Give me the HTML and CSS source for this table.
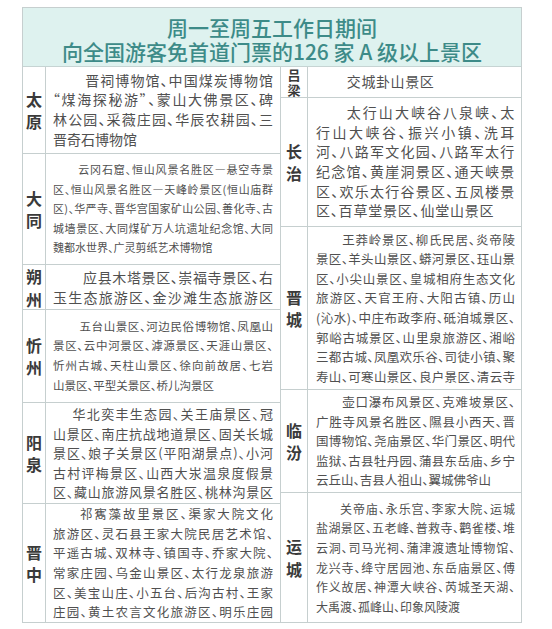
FILE: index.html
```html
<!DOCTYPE html>
<html lang="zh-CN">
<head>
<meta charset="utf-8">
<title>免首道门票景区</title>
<link rel="stylesheet" href="styles.css">
</head>
<body>
<div class="sheet">
  <div class="head">
    <h1 class="ttl">周一至周五工作日期间<br>向全国游客免首道门票的126 家 A 级以上景区</h1>
  </div>
  <div class="body">
    <div class="col col-l">
      <div class="row">
        <div class="lab">太原</div>
        <div class="txt fs-ty">
          <span class="ln first">晋祠博物馆、中国煤炭博物馆</span>
          <span class="ln">“煤海探秘游”、蒙山大佛景区、碑</span>
          <span class="ln">林公园、采薇庄园、华辰农耕园、三</span>
          <span class="ln last">晋奇石博物馆</span>
        </div>
      </div>
      <div class="row">
        <div class="lab">大同</div>
        <div class="txt fs-dt">
          <span class="ln first">云冈石窟、恒山风景名胜区—悬空寺景</span>
          <span class="ln">区、恒山风景名胜区—天峰岭景区(恒山庙群</span>
          <span class="ln">区)、华严寺、晋华宫国家矿山公园、善化寺、古</span>
          <span class="ln">城墙景区、大同煤矿万人坑遗址纪念馆、大同</span>
          <span class="ln last">魏都水世界、广灵剪纸艺术博物馆</span>
        </div>
      </div>
      <div class="row">
        <div class="lab">朔州</div>
        <div class="txt fs-sz">
          <span class="ln first">应县木塔景区、崇福寺景区、右</span>
          <span class="ln">玉生态旅游区、金沙滩生态旅游区</span>
        </div>
      </div>
      <div class="row">
        <div class="lab">忻州</div>
        <div class="txt fs-xz">
          <span class="ln first">五台山景区、河边民俗博物馆、凤凰山</span>
          <span class="ln">景区、云中河景区、滹源景区、天涯山景区、</span>
          <span class="ln">忻州古城、天柱山景区、徐向前故居、七岩</span>
          <span class="ln last">山景区、平型关景区、桥儿沟景区</span>
        </div>
      </div>
      <div class="row">
        <div class="lab">阳泉</div>
        <div class="txt fs-yq">
          <span class="ln first">华北奕丰生态园、关王庙景区、冠</span>
          <span class="ln">山景区、南庄抗战地道景区、固关长城</span>
          <span class="ln">景区、娘子关景区(平阳湖景点)、小河</span>
          <span class="ln">古村评梅景区、山西大汖温泉度假景</span>
          <span class="ln">区、藏山旅游风景名胜区、桃林沟景区</span>
        </div>
      </div>
      <div class="row">
        <div class="lab">晋中</div>
        <div class="txt fs-jz">
          <span class="ln first">祁寯藻故里景区、渠家大院文化</span>
          <span class="ln">旅游区、灵石县王家大院民居艺术馆、</span>
          <span class="ln">平遥古城、双林寺、镇国寺、乔家大院、</span>
          <span class="ln">常家庄园、乌金山景区、太行龙泉旅游</span>
          <span class="ln">区、美宝山庄、小五台、后沟古村、王家</span>
          <span class="ln">庄园、黄土农言文化旅游区、明乐庄园</span>
        </div>
      </div>
    </div>
    <div class="col col-r">
      <div class="row">
        <div class="lab lab-sm">吕梁</div>
        <div class="txt fs-ll">
          <span class="ln first last">交城卦山景区</span>
        </div>
      </div>
      <div class="row">
        <div class="lab">长治</div>
        <div class="txt fs-cz">
          <span class="ln first">太行山大峡谷八泉峡、太</span>
          <span class="ln">行山大峡谷、振兴小镇、洗耳</span>
          <span class="ln">河、八路军文化园、八路军太行</span>
          <span class="ln">纪念馆、黄崖洞景区、通天峡景</span>
          <span class="ln">区、欢乐太行谷景区、五凤楼景</span>
          <span class="ln last">区、百草堂景区、仙堂山景区</span>
        </div>
      </div>
      <div class="row">
        <div class="lab">晋城</div>
        <div class="txt fs-jc">
          <span class="ln first">王莽岭景区、柳氏民居、炎帝陵</span>
          <span class="ln">景区、羊头山景区、蟒河景区、珏山景</span>
          <span class="ln">区、小尖山景区、皇城相府生态文化</span>
          <span class="ln">旅游区、天官王府、大阳古镇、历山</span>
          <span class="ln">(沁水)、中庄布政李府、砥洎城景区、</span>
          <span class="ln">郭峪古城景区、山里泉旅游区、湘峪</span>
          <span class="ln">三都古城、凤凰欢乐谷、司徒小镇、聚</span>
          <span class="ln">寿山、可寒山景区、良户景区、清云寺</span>
        </div>
      </div>
      <div class="row">
        <div class="lab">临汾</div>
        <div class="txt fs-lf">
          <span class="ln first">壶口瀑布风景区、克难坡景区、</span>
          <span class="ln">广胜寺风景名胜区、隰县小西天、晋</span>
          <span class="ln">国博物馆、尧庙景区、华门景区、明代</span>
          <span class="ln">监狱、古县牡丹园、蒲县东岳庙、乡宁</span>
          <span class="ln last">云丘山、吉县人祖山、翼城佛爷山</span>
        </div>
      </div>
      <div class="row">
        <div class="lab">运城</div>
        <div class="txt fs-yc">
          <span class="ln first">关帝庙、永乐宫、李家大院、运城</span>
          <span class="ln">盐湖景区、五老峰、普救寺、鹳雀楼、堆</span>
          <span class="ln">云洞、司马光祠、蒲津渡遗址博物馆、</span>
          <span class="ln">龙兴寺、绛守居园池、东岳庙景区、傅</span>
          <span class="ln">作义故居、神潭大峡谷、芮城圣天湖、</span>
          <span class="ln last">大禹渡、孤峰山、印象风陵渡</span>
        </div>
      </div>
    </div>
  </div>
</div>
</body>
</html>
```
FILE: styles.css
```css
* { box-sizing: border-box; }
html, body { margin: 0; padding: 0; background: #ffffff; }
body {
  font-family: "Noto Sans CJK SC", "Noto Sans", sans-serif;
  color: #4a4a4a;
}
.sheet {
  margin: 7px 0 0 22px;
  width: 500px;
  border: 1px solid #c6cfcf;
}
.head {
  background: #def2ef;
  border-bottom: 1px solid #c6d4d3;
  padding: 7px 0 3px;
}
.ttl {
  margin: 0;
  color: #3d8b88;
  font-size: 21px;
  font-weight: 500;
  line-height: 24px;
  text-align: center;
  white-space: nowrap;
}
.body {
  display: grid;
  grid-template-columns: 258px 1fr;
}
.col { display: grid; }
.col-l {
  border-right: 1px solid #c6cfcf;
  grid-template-rows: 87px 111px 45px 93px 101px 118px;
}
.col-r {
  grid-template-rows: 31px 129px 163px 103px 129px;
}
.row {
  display: grid;
  border-bottom: 1px solid #c6cfcf;
}
.row:last-child { border-bottom: none; }
.col-l .row { grid-template-columns: 23px 1fr; }
.col-r .row { grid-template-columns: 27px 1fr; }
.lab {
  border-right: 1px solid #c6cfcf;
  display: flex;
  align-items: center;
  justify-content: center;
  text-align: center;
  font-size: 16px;
  line-height: 22.5px;
  font-weight: 700;
  color: #3a3a3a;
  word-break: break-all;
  padding: 0 3px;
}
.lab-sm {
  font-size: 13px;
  line-height: 15px;
}
.txt {
  display: flex;
  flex-direction: column;
  justify-content: center;
  line-height: 19.6px;
  font-feature-settings: "halt" 1;
  color: #505050;
}
.col-l .txt { padding: 0 7px 0 7px; }
.col-r .txt { padding: 0 6px 0 8px; }
.ln {
  display: block;
  text-align: justify;
  text-align-last: justify;
  white-space: nowrap;
}
.ln.last { text-align-last: left; }
.first { padding-left: 2em; }

.fs-ty { font-size: 14px; }
.fs-ty .first { padding-left: 2.3em; }
.fs-dt { font-size: 11px; }
.fs-dt .first { padding-left: 2.3em; }
.fs-sz { font-size: 14px; }
.fs-sz .first { padding-left: 2.15em; }
.fs-xz { font-size: 11.5px; }
.fs-xz .first { padding-left: 2.3em; }
.fs-yq { font-size: 13px; }
.fs-yq .first { padding-left: 1.5em; }
.fs-jz { font-size: 12.5px; }
.fs-jz .first { padding-left: 2.15em; }
.fs-ll { font-size: 14px; letter-spacing: 0.6px; }
.fs-ll .first { padding-left: 2.2em; }
.fs-cz { font-size: 14px; letter-spacing: 0.8px; }
.fs-cz .first { padding-left: 2.2em; }
.fs-jc { font-size: 12.5px; }
.fs-jc .first { padding-left: 2.1em; }
.fs-lf { font-size: 12.5px; }
.fs-lf .first { padding-left: 2.1em; }
.fs-yc { font-size: 12px; }
.fs-yc .first { padding-left: 2em; }
```
